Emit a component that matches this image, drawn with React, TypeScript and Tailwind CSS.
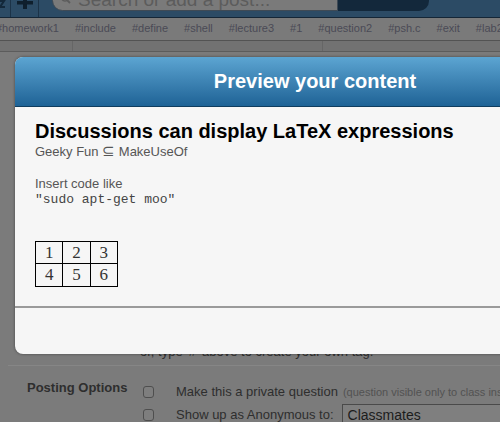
const tags = [
  "#homework1",
  "#include",
  "#define",
  "#shell",
  "#lecture3",
  "#1",
  "#question2",
  "#psh.c",
  "#exit",
  "#lab2",
];

function TopBar() {
  return (
    <div className="flex h-[18px] items-start border-b border-[#152636] bg-[#2c4b65]">
      <div className="flex h-full w-[11px] items-start border-r border-[#1c3348]">
        <svg width="6" height="9" viewBox="0 0 6 9">
          <path d="M0 1 H4 L0 7 H5" stroke="#13283a" strokeWidth="2" fill="none" />
        </svg>
      </div>
      <div className="flex h-full w-[28px] items-start justify-center border-r border-[#1c3348]">
        <svg width="16" height="10" viewBox="0 0 16 10">
          <rect x="6" y="0" width="4" height="9" fill="#0f1f2d" />
          <rect x="0" y="1" width="16" height="3.5" fill="#0f1f2d" />
        </svg>
      </div>
      <div className="-mt-[10px] ml-[13px] flex h-[21px] w-[286px] items-center gap-[7px] rounded-l-[11px] border border-[#3f4a55] bg-[#7a7a7a] pl-[8px]">
        <svg width="10" height="10" viewBox="0 0 10 10" className="-mt-[2px]">
          <circle cx="4" cy="3" r="3" stroke="#5c5c5c" strokeWidth="1.5" fill="none" />
          <path d="M6 5 L9 8" stroke="#5c5c5c" strokeWidth="1.8" />
        </svg>
        <span className="-mt-[1px] whitespace-nowrap text-[19px] leading-[22px] text-[#5c5c5c]">
          Search or add a post...
        </span>
      </div>
      <div className="-mt-[10px] h-[21px] w-[91px] rounded-br-[10px] bg-[#13283b]" />
    </div>
  );
}

function TagBar() {
  return (
    <div className="flex h-[23px] items-center gap-[16px] whitespace-nowrap border-b border-[#535353] bg-[#7a7a7a] pb-[1px] text-[11px] text-[#4a4a56]">
      {tags.map((t, i) => (
        <span key={t} className={i === 0 ? "-ml-[4px]" : ""}>
          {t}
        </span>
      ))}
    </div>
  );
}

function Preview() {
  return (
    <div className="absolute left-[15px] top-[57px] flex h-[297px] w-[600px] flex-col overflow-hidden rounded-[8px] bg-[#f6f6f6] shadow-[0_0_3px_rgba(0,0,0,0.45)]">
      <div className="flex h-[50px] items-center justify-center border-b border-[#0f3d5f] bg-gradient-to-b from-[#5ca5d2] to-[#1e6396] pb-[1px]">
        <span className="text-[20px] font-bold text-white">Preview your content</span>
      </div>
      <div className="flex h-[201px] flex-col border-b-2 border-[#9a9a9a] px-[20px] pt-[12px]">
        <h1 className="text-[20px] font-bold leading-[24px] text-black">
          Discussions can display LaTeX expressions
        </h1>
        <p className="text-[13px] leading-[17px] text-[#555]">
          Geeky Fun <span className="text-[15px] leading-[15px]">⊆</span> MakeUseOf
        </p>
        <p className="mt-[16px] text-[13px] leading-[16px] text-[#555]">Insert code like</p>
        <p className="font-['Liberation_Mono','DejaVu_Sans_Mono',monospace] text-[13px] leading-[15px] text-[#444]">
          "sudo apt-get moo"
        </p>
        <table className="mt-[34px] w-[83px] border-collapse font-['Liberation_Serif','DejaVu_Serif',serif] text-[17px] leading-[20px] text-[#333]">
          <tbody>
            <tr>
              <td className="h-[22px] w-[27px] border border-black text-center">1</td>
              <td className="h-[22px] w-[27px] border border-black text-center">2</td>
              <td className="h-[22px] w-[27px] border border-black text-center">3</td>
            </tr>
            <tr>
              <td className="h-[23px] border border-black text-center">4</td>
              <td className="h-[23px] border border-black text-center">5</td>
              <td className="h-[23px] border border-black text-center">6</td>
            </tr>
          </tbody>
        </table>
      </div>
      <div className="flex-1" />
    </div>
  );
}

function Checkbox() {
  return <div className="h-[12px] w-[11px] shrink-0 rounded-[3px] border border-[#4e4e4e] bg-[#7e7e7e]" />;
}

export default function App() {
  return (
    <div className="relative h-[422px] w-[500px] overflow-hidden bg-[#7b7b7b] font-['Liberation_Sans',Arial,sans-serif]">
      <TopBar />
      <TagBar />
      <div className="flex h-[11px] border-b border-[#5c5c5c] bg-[#727272]">
        <div className="w-[73px] border-r border-[#666]" />
        <div className="w-[250px] border-r border-[#666]" />
      </div>
      <div className="pl-[140px] pt-[292px] text-[13px] leading-[16px] text-[#2f2f2f]">
        or, type '#' above to create your own tag.
      </div>
      <div className="ml-[8px] mt-[5px] border-t border-[#868686]" />
      <div className="flex pt-[14px] text-[13px] text-[#2e2e2e]">
        <div className="w-[143px] shrink-0 whitespace-nowrap pl-[27px] font-bold leading-[16px]">
          Posting Options
        </div>
        <div className="flex flex-col gap-[4px]">
          <div className="flex items-center whitespace-nowrap leading-[16px]">
            <div className="mt-[3px]">
              <Checkbox />
            </div>
            <span className="ml-[22px] mt-[3px]">Make this a private question</span>
            <span className="ml-[5px] mt-[4px] text-[11px] text-[#525252]">
              (question visible only to class instructors)
            </span>
          </div>
          <div className="flex items-center whitespace-nowrap">
            <Checkbox />
            <span className="ml-[22px] leading-[16px]">Show up as Anonymous to:</span>
            <div className="ml-[8px] h-[22px] w-[200px] shrink-0 border border-[#4a4a4a] bg-[#7f7f7f] pl-[5px] text-[14px] leading-[20px] text-[#1c1c1c]">
              Classmates
            </div>
          </div>
        </div>
      </div>
      <Preview />
    </div>
  );
}
